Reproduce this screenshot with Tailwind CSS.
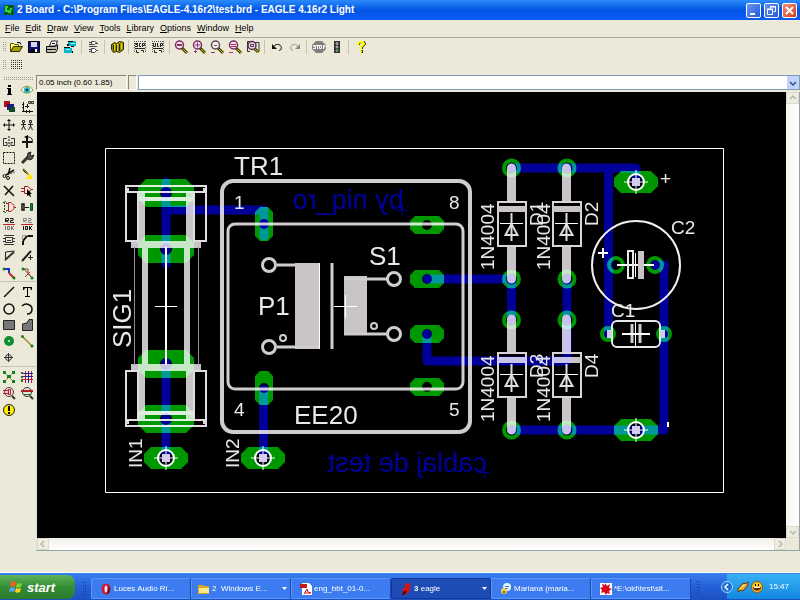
<!DOCTYPE html>
<html lang="en">
<head>
    <meta charset="UTF-8">
    <meta name="viewport" content="width=device-width, initial-scale=1.0">
    <title>2 Board - EAGLE 4.16r2 Light</title>
    <script src="https://cdn.jsdelivr.net/npm/@tailwindcss/browser@4"></script>
</head>
<body class="flex h-screen flex-col overflow-hidden bg-[#ece9d8] font-['Liberation_Sans',sans-serif] text-[8px] leading-none text-black">

    <!-- Title bar -->
    <header class="flex h-5 shrink-0 items-center gap-[2px] bg-linear-to-b from-[#2b8bfa] via-[#0354e4] to-[#0a5cf6] px-[3px]">
        <svg class="size-3" viewBox="0 0 12 12"><path fill="#0a6a1c" d="M1 1h10v10H1z"/><path fill="#35d048" d="M2 2h3v2H4v2h3V4h2v2H8v3H5V8H2z"/><path fill="#042c08" d="M6 2h4v1H6zM2 9h2v1H2zM9 8h1v2H9z"/></svg>
        <h1 class="flex-1 truncate text-[10px] leading-4 font-bold text-white">2 Board - C:\Program Files\EAGLE-4.16r2\test.brd - EAGLE 4.16r2 Light</h1>
        <div class="flex gap-[3px]">
            <button aria-label="Minimize" class="size-[15px] rounded-[2px] border border-white bg-linear-to-br from-[#6a96f4] to-[#2456d8]"><svg viewBox="0 0 13 13"><path fill="#fff" d="M3 9h5v2H3z"/></svg></button>
            <button aria-label="Restore" class="size-[15px] rounded-[2px] border border-white bg-linear-to-br from-[#6a96f4] to-[#2456d8]"><svg viewBox="0 0 13 13"><path fill="none" stroke="#fff" d="M5.500 4.500v-2h5v5h-2M2.500 5.500h5v5h-5zM2 5h6M5 3h6"/></svg></button>
            <button aria-label="Close" class="size-[15px] rounded-[2px] border border-white bg-linear-to-br from-[#f09078] to-[#d03c14]"><svg viewBox="0 0 13 13"><path fill="none" stroke="#fff" stroke-width="2" d="M3 3l7 7M10 3l-7 7"/></svg></button>
        </div>
    </header>

    <!-- Menu -->
    <nav class="flex h-[18px] shrink-0 items-center gap-[6px] border-b border-[#aca899] px-[5px] text-[9px]">
        <a href="#"><u>F</u>ile</a>
        <a href="#"><u>E</u>dit</a>
        <a href="#"><u>D</u>raw</a>
        <a href="#"><u>V</u>iew</a>
        <a href="#"><u>T</u>ools</a>
        <a href="#"><u>L</u>ibrary</a>
        <a href="#"><u>O</u>ptions</a>
        <a href="#"><u>W</u>indow</a>
        <a href="#"><u>H</u>elp</a>
    </nav>

    <!-- Action toolbar -->
    <div class="flex h-[18px] shrink-0 items-center">
        <svg class="h-3 w-[7px]" viewBox="0 0 7 12"><path stroke="#9d9a8c" stroke-dasharray="1 1" d="M3.500 1v10M5.500 1v10"/></svg>
        <button title="Open" class="w-[18px]"><svg class="mx-auto size-4" viewBox="0 0 16 16"><path fill="#ffff60" stroke="#585800" d="M2.500 12.500v-8h3l1 1h4v2"/><path fill="#a8a000" stroke="#303000" d="M2.500 12.500l3-5h9l-3 5z"/><path fill="none" stroke="#000" d="M9 3.500h3l1 2"/></svg></button>
        <button title="Save" class="w-[18px]"><svg class="mx-auto size-4" viewBox="0 0 16 16"><path fill="#10107c" stroke="#000" d="M2.500 2.500h11v11h-11z"/><path fill="#d8d8e8" d="M5 3h6v5H5z"/><path fill="#000" d="M5 10h6v3H5z"/><path fill="#fff" d="M9 10h2v3H9z"/></svg></button>
        <button title="Print" class="w-[18px]"><svg class="mx-auto size-4" viewBox="0 0 16 16"><path fill="#fff" stroke="#222" d="M5.500 7l2-5h6l-2 5z"/><path fill="#b8b8b0" stroke="#111" d="M2.500 7.500h9l2-2v5l-2 3h-9z"/><path stroke="#111" d="M3 10.500h9M8 4.500h3"/><path fill="#ff0" d="M9 11h2v1H9z"/></svg></button>
        <button title="CAM processor" class="w-[18px]"><svg class="mx-auto size-4" viewBox="0 0 16 16"><path fill="#00b8c8" d="M6 2h8v5H6zM2 9h8v5H2z"/><path fill="#000" d="M6 2h5v1H6zM9 7h3v1H9zM2 8h6v1H2zM10 12h1v2h-1zM5 5h2v2H5z"/><path fill="#a0ffff" d="M9 4h4v1H9zM4 10h4v1H4z"/></svg></button>
        <span class="mx-[2px] h-3.5 w-px bg-[#c8c4b4]"></span>
        <button title="Schematic" class="w-[18px]"><svg class="mx-auto size-4" viewBox="0 0 16 16"><path fill="#fff" stroke="#444" d="M6.500 2.500h3l2 1-2 2h-3zM6.500 9.500h3l2 2-2 2h-3z"/><path stroke="#444" d="M4 3.500h3M4 5.500h3M11 4.500h2M4 7.500h8M4 10.500h3M4 12.500h3M11 11.500h2"/></svg></button>
        <span class="mr-[3px] ml-[2px] h-3.5 w-px bg-[#c8c4b4]"></span>
        <button title="Library" class="w-[18px]"><svg class="mx-auto size-4" viewBox="0 0 16 16"><path fill="#989000" stroke="#2c2800" d="M2.500 5.500l3-2 2 1 3-2 4 1v7l-4 3-3-1-3 1-2-3z"/><path stroke="#e0d800" d="M5.500 5v6M8.500 5v7M12.500 4v6"/><path stroke="#222" d="M4.500 6v5M7.500 6v6M10.500 5v7"/></svg></button>
        <span class="mx-[2px] h-3.5 w-px bg-[#c8c4b4]"></span>
        <button title="Run script" class="w-[18px]"><svg class="mx-auto size-4" viewBox="0 0 16 16"><path fill="none" stroke="#555" stroke-dasharray="1 1" d="M2.500 2v11M2 2.500h12M13.500 2v11"/><path fill="none" stroke="#222" d="M6 4.500H3.500v1h2v2H3M9 4.500H7.500v3H9M10.500 8V4.500h2v2h-2M3 9.500h10M4.500 11v2.500H7M9 11.500h2.500v2"/></svg></button>
        <button title="Run ULP" class="w-[18px]"><svg class="mx-auto size-4" viewBox="0 0 16 16"><path fill="none" stroke="#555" stroke-dasharray="1 1" d="M2.500 2v11M2 2.500h12M13.500 2v11"/><path fill="none" stroke="#222" d="M3.500 4v3.500h2V4M7.500 4v3.500H9M10.500 8V4.500h2v2h-2M3 9.500h10M4.500 11v2.500H7M9 11.500h2.500v2"/></svg></button>
        <span class="mx-[2px] h-3.5 w-px bg-[#c8c4b4]"></span>
        <button title="Zoom to fit" class="w-[18px]"><svg class="mx-auto size-4" viewBox="0 0 16 16"><path stroke="#404000" stroke-width="3" d="M9 9l5 5"/><path stroke="#c8c000" d="M10 10l4 4"/><circle cx="6.500" cy="6" r="4" fill="#f4e4f0" stroke="#783060" stroke-width="1.500"/><path fill="#903060" d="M4 5h5v2H4z"/></svg></button>
        <button title="Zoom in" class="w-[18px]"><svg class="mx-auto size-4" viewBox="0 0 16 16"><path stroke="#404000" stroke-width="3" d="M9 9l5 5"/><path stroke="#c8c000" d="M10 10l4 4"/><circle cx="6.500" cy="6" r="4" fill="#f4e4f0" stroke="#783060" stroke-width="1.500"/><path stroke="#903080" d="M6.500 3.500v5M4 6h5M4.500 11v3M3 12.500h3"/></svg></button>
        <button title="Zoom out" class="w-[18px]"><svg class="mx-auto size-4" viewBox="0 0 16 16"><path stroke="#404000" stroke-width="3" d="M9 9l5 5"/><path stroke="#c8c000" d="M10 10l4 4"/><circle cx="6.500" cy="6" r="4" fill="#f8f4f4" stroke="#604858" stroke-width="1.500"/><path stroke="#903080" d="M5 6.500h3M2 13.500h4"/></svg></button>
        <button title="Redraw" class="w-[18px]"><svg class="mx-auto size-4" viewBox="0 0 16 16"><path stroke="#404000" stroke-width="3" d="M9 9l5 5"/><path stroke="#c8c000" d="M10 10l4 4"/><circle cx="6.500" cy="6" r="4" fill="#f4e4f0" stroke="#783060" stroke-width="1.500"/><path stroke="#c02060" d="M4 5.500h5M4 7.500h5M2 13.500h4"/></svg></button>
        <button title="Zoom select" class="w-[18px]"><svg class="mx-auto size-4" viewBox="0 0 16 16"><path fill="none" stroke="#333" d="M5 12.500H2.500V2.500H5M10 3.500h4v9h-2"/><path stroke="#404000" stroke-width="3" d="M9 9l4 4"/><path stroke="#c8c000" d="M10 10l4 4"/><circle cx="7" cy="6.500" r="4" fill="#e8d8e4" stroke="#583050" stroke-width="1.500"/><path fill="none" stroke="#583050" d="M5.500 5.500h3v2h-3z"/></svg></button>
        <span class="mr-[3px] ml-[2px] h-3.5 w-px bg-[#c8c4b4]"></span>
        <button title="Undo" class="w-[18px]"><svg class="mx-auto size-4" viewBox="0 0 16 16"><path fill="none" stroke="#111" d="M5 7.500c2-4 9-2 7 3l-2 1"/><path fill="#111" d="M3 5v5h5z"/></svg></button>
        <button title="Redo" class="w-[18px]"><svg class="mx-auto size-4" viewBox="0 0 16 16"><path fill="none" stroke="#a09c90" d="M11 7.500c-2-4-9-2-7 3l2 1"/><path fill="#8c887c" d="M13 5v5H8z"/></svg></button>
        <span class="mr-[3px] ml-[2px] h-3.5 w-px bg-[#c8c4b4]"></span>
        <button title="Stop" class="w-[18px]"><svg class="mx-auto size-4" viewBox="0 0 16 16"><path fill="#808080" d="M5 2h6l4 4v4l-4 4H5l-4-4V6z"/><path fill="none" stroke="#fff" d="M4.500 6.500H2.500v1h2v2H2M5 6.500h3M6.500 6v4M8.500 6.500h2v3h-2zM12.500 10V6.500h1.500v1.500h-2"/></svg></button>
        <button title="Go" class="w-[18px]"><svg class="mx-auto size-4" viewBox="0 0 16 16"><path fill="#303030" d="M5 2h6v12H5z"/><circle cx="8" cy="4.500" r="1.500" fill="#a0a0a0"/><circle cx="8" cy="8" r="1.500" fill="#a0a0a0"/><circle cx="8" cy="11.500" r="1.500" fill="#5c9c5c"/></svg></button>
        <span class="mr-[3px] ml-[2px] h-3.5 w-px bg-[#c8c4b4]"></span>
        <button title="Help" class="w-[18px]"><svg class="mx-auto size-4" viewBox="0 0 16 16"><path fill="none" stroke="#333300" stroke-width="2" d="M6 6V4l2-1h3l1 2-3 3v2M9 11v3"/><path fill="none" stroke="#ff0" stroke-width="2" d="M5 6V4l2-1h3l1 2-3 3v2M8 11.500v2"/></svg></button>
    </div>

    <!-- Parameter toolbar -->
    <div class="flex h-[18px] shrink-0 items-center">
        <svg class="h-3 w-[7px]" viewBox="0 0 7 12"><path stroke="#9d9a8c" stroke-dasharray="1 1" d="M3.500 1v10M5.500 1v10"/></svg>
        <button title="Grid" class="w-[18px]"><svg class="mx-auto size-4" viewBox="0 0 16 16"><path stroke="#333" stroke-dasharray="1 1" d="M3 3.500h11M3 5.500h11M3 7.500h11M3 9.500h11M3 11.500h11"/></svg></button>
    </div>

    <div class="flex min-h-0 flex-1">
        <!-- Command palette -->
        <aside class="w-9 shrink-0">
            <svg class="h-2 w-9" viewBox="0 0 36 8"><path stroke="#9d9a8c" stroke-dasharray="1 1" d="M4 3.500h29M4 5.500h29"/></svg>
            <div class="grid h-[34px] auto-rows-fr grid-cols-2 border-b border-[#c8c4b4]">
                <button title="Info"><svg class="mx-auto size-4" viewBox="0 0 16 16"><path d="M7 3h3v2H7zM6 6h4v6h1v1H6v-1h1V7H6z"/></svg></button>
                <button title="Show"><svg class="mx-auto size-4" viewBox="0 0 16 16"><path fill="#fff" stroke="#a09010" d="M2 8c3-5 9-5 12 0-3 4-9 4-12 0z"/><circle cx="8" cy="8" r="3" fill="#10b8d0"/><circle cx="8" cy="8" r="1"/></svg></button>
                <button title="Display"><svg class="mx-auto size-4" viewBox="0 0 16 16"><path fill="#b01020" d="M3 2h6v6H3z"/><path fill="#1818a0" d="M6 5h7v6H6z"/><path fill="#104820" d="M8 8h6v5H8z"/><path fill="#301050" d="M6 5h3v3H6z"/></svg></button>
                <button title="Mark"><svg class="mx-auto size-4" viewBox="0 0 16 16"><path fill="none" stroke="#111" d="M4.500 3v9M3 12.500h11M3 5.500h2M3 8.500h2M7.500 11v3M10.500 11v3M8.500 5v4M6 7.500h4"/><path fill="none" stroke="#333" d="M9.500 2.500h2v2h-2zM12.500 2.500h2v2h-2z"/></svg></button>
            </div>
            <div class="grid h-[166px] auto-rows-fr grid-cols-2 border-b border-[#c8c4b4] pt-px">
                <button title="Move"><svg class="mx-auto size-4" viewBox="0 0 16 16"><path stroke="#111" d="M8 3v10M3 8h10"/><path d="M8 2l2 2H6zM8 14l2-2H6zM2 8l2-2v4zM14 8l-2-2v4z"/></svg></button>
                <button title="Copy"><svg class="mx-auto size-4" viewBox="0 0 16 16"><path fill="none" stroke="#222" d="M3.500 3.500h2v2h-2zM4.500 6v4M2 7.500h5M4.500 9l-2 4M4.500 9l2 4M10.500 3.500h2v2h-2zM11.500 6v4M9 7.500h5M11.500 9l-2 4M11.500 9l2 4"/></svg></button>
                <button title="Mirror"><svg class="mx-auto size-4" viewBox="0 0 16 16"><path fill="none" stroke="#333" d="M6 4.500H2.500v7H6v-3H4M10 4.500h3.500v7H10v-3h2"/><path stroke="#111" stroke-dasharray="2 1" d="M8 2v12"/></svg></button>
                <button title="Rotate"><svg class="mx-auto size-4" viewBox="0 0 16 16"><path fill="none" stroke="#111" stroke-width="2" d="M8 4v10M3 8h10"/><path fill="none" stroke="#111" d="M9 3c4 0 5 3 4 6"/><path d="M5 3l4-2v4z"/></svg></button>
                <button title="Group"><svg class="mx-auto size-4" viewBox="0 0 16 16"><path fill="none" stroke="#111" stroke-dasharray="2 1" d="M2.500 2.500h11v11h-11z"/></svg></button>
                <button title="Change"><svg class="mx-auto size-4" viewBox="0 0 16 16"><path fill="none" stroke="#333" stroke-width="3" d="M3 13l6-6"/><path fill="#555" stroke="#222" d="M8 7l1-4 3-1-1 3 1 1 3-1-2 4-3 1z"/></svg></button>
                <button title="Cut"><svg class="mx-auto size-4" viewBox="0 0 16 16"><path fill="none" stroke="#111" stroke-width="1.500" d="M13 4L5 9M9 2L7 9"/><circle cx="3.500" cy="10" r="1.500" fill="none" stroke="#111"/><circle cx="7" cy="12" r="1.500" fill="none" stroke="#111"/><path stroke="#777" d="M9 8l5-2"/></svg></button>
                <button title="Paste"><svg class="mx-auto size-4" viewBox="0 0 16 16"><path stroke="#888020" stroke-width="2" d="M4 3l6 6"/><path stroke="#111" d="M4 4l3 3"/><path fill="#ffe800" d="M9 7l4 3v3H6l3-2z"/></svg></button>
                <button title="Delete"><svg class="mx-auto size-4" viewBox="0 0 16 16"><path fill="none" stroke="#111" stroke-width="1.500" d="M3 3l10 10M12 3l-8 9"/></svg></button>
                <button title="Add"><svg class="mx-auto size-4" viewBox="0 0 16 16"><path fill="none" stroke="#a02020" d="M5.500 3.500H9l3 3-3 4H5.500zM2 5.500h3M2 8.500h3M12 6.500h2"/><path d="M8 6l5 5h-2l1 3h-1l-1-2-2 1z"/></svg></button>
                <button title="Pinswap"><svg class="mx-auto size-4" viewBox="0 0 16 16"><path fill="none" stroke="#b02020" d="M7.500 3.500H10l3 3v3l-3 3H7.500zM13 8.500h2M5 4.500h3M5 11.500h3"/><path fill="none" stroke="#106020" stroke-dasharray="2 1" d="M3.500 3v10M2 4l2-2 2 2M2 12l2 2 2-2"/></svg></button>
                <button title="Gateswap"><svg class="mx-auto size-4" viewBox="0 0 16 16"><path fill="none" stroke="#111" stroke-width="1.500" d="M3 5h2v6H3z"/><path fill="#208030" stroke="#053" d="M11.500 4.500h2v7h-2z"/><path stroke="#111" d="M6 8.500h4"/></svg></button>
                <button title="Name"><svg class="mx-auto size-4" viewBox="0 0 16 16"><path fill="none" stroke="#111" d="M4.500 6V2.500h3v2h-3l3 2M9 2.500h3v2H9.500v2H13"/><path stroke="#c02020" d="M2 8.500h12"/><path fill="none" stroke="#777" d="M4.500 10v4M6.500 10.500h2v3h-2zM10.500 10v4M13 10l-2 2 2 2"/></svg></button>
                <button title="Value"><svg class="mx-auto size-4" viewBox="0 0 16 16"><path fill="none" stroke="#888" d="M4.500 6V2.500h3v2h-3l3 2M9 2.500h3v2H9.500v2H13"/><path stroke="#c02020" d="M2 8.500h12"/><path fill="none" stroke="#111" d="M4.500 10v4M6.500 10.500h2v3h-2zM10.500 10v4M13 10l-2 2 2 2"/></svg></button>
                <button title="Smash"><svg class="mx-auto size-4" viewBox="0 0 16 16"><path fill="none" stroke="#333" d="M4.500 5.500h7v5h-7zM3 3.500h10M3 12.500h10M2 6.500h2M2 9.500h2M12 6.500h2M12 9.500h2M6 8.500h4"/></svg></button>
                <button title="Miter"><svg class="mx-auto size-4" viewBox="0 0 16 16"><path fill="none" stroke="#111" stroke-width="2" d="M4 13V9l4-5h6"/><path stroke="#999" d="M3.500 9V3.500H9" fill="none"/></svg></button>
                <button title="Split"><svg class="mx-auto size-4" viewBox="0 0 16 16"><path fill="none" stroke="#222" d="M4.500 12.500V4l9-1"/><path stroke="#333" stroke-width="2" d="M4 12l9-8"/></svg></button>
                <button title="Optimize"><svg class="mx-auto size-4" viewBox="0 0 16 16"><path stroke="#222" stroke-width="2" d="M3 13L12 3"/><path stroke="#222" d="M9 9.500h5M11.500 7v5"/></svg></button>
                <button title="Route"><svg class="mx-auto size-4" viewBox="0 0 16 16"><path fill="none" stroke="#1830d0" stroke-width="2" d="M3 4h5v4"/><path stroke="#d02020" stroke-width="2" d="M8 8l5 5"/><circle cx="3" cy="4" r="1.500" fill="#108020"/><circle cx="13" cy="13" r="1.500" fill="#108020"/></svg></button>
                <button title="Ripup"><svg class="mx-auto size-4" viewBox="0 0 16 16"><path fill="none" stroke="#904020" d="M3 4h6v4l4 5M5 4l8 9M6 12l5-5"/><circle cx="4" cy="4" r="1.500" fill="#108020"/><circle cx="13" cy="13" r="1.500" fill="#108020"/></svg></button>
            </div>
            <div class="grid h-[85px] auto-rows-fr grid-cols-2 border-b border-[#c8c4b4] pt-[2px]">
                <button title="Wire"><svg class="mx-auto size-4" viewBox="0 0 16 16"><path stroke="#111" stroke-width="1.500" d="M3 13L13 3"/></svg></button>
                <button title="Text"><svg class="mx-auto size-4" viewBox="0 0 16 16"><path d="M4 3h9v3h-1l-1-2H9v8h2v1H6v-1h2V4H6L5 6H4z"/></svg></button>
                <button title="Circle"><svg class="mx-auto size-4" viewBox="0 0 16 16"><circle cx="8" cy="8" r="5" fill="none" stroke="#111" stroke-width="1.500"/></svg></button>
                <button title="Arc"><svg class="mx-auto size-4" viewBox="0 0 16 16"><path fill="none" stroke="#111" stroke-width="1.500" d="M3 5c4-4 10-1 10 3 0 3-2 5-5 5"/></svg></button>
                <button title="Rect"><svg class="mx-auto size-4" viewBox="0 0 16 16"><path fill="#777" stroke="#222" d="M2.500 3.500h11v9h-11z"/></svg></button>
                <button title="Polygon"><svg class="mx-auto size-4" viewBox="0 0 16 16"><path fill="#777" stroke="#222" d="M3.500 13.500V7L8 6l2-3.500h3.500v11z"/></svg></button>
                <button title="Via"><svg class="mx-auto size-4" viewBox="0 0 16 16"><circle cx="8" cy="8" r="5" fill="#109030"/><circle cx="8" cy="8" r="1" fill="#eee"/></svg></button>
                <button title="Signal"><svg class="mx-auto size-4" viewBox="0 0 16 16"><path stroke="#a09020" stroke-width="1.500" d="M4 4l9 9"/><circle cx="3.500" cy="3.500" r="1.500" fill="#108020"/><circle cx="13" cy="13" r="1.500" fill="#108020"/></svg></button>
                <button title="Hole"><svg class="mx-auto size-4" viewBox="0 0 16 16"><circle cx="7.500" cy="7.500" r="3" fill="none" stroke="#333"/><path stroke="#333" d="M3 7.500h9M7.500 3v9"/></svg></button>
            </div>
            <div class="grid h-[51px] auto-rows-fr grid-cols-2 pt-[2px]">
                <button title="Ratsnest"><svg class="mx-auto size-4" viewBox="0 0 16 16"><path stroke="#909020" d="M3 3l10 10M13 3L3 13"/><path fill="#108020" d="M2 2h3v3H2zM11 2h3v3h-3zM6 6h4v3H6zM2 11h3v3H2zM11 11h3v3h-3z"/></svg></button>
                <button title="Auto"><svg class="mx-auto size-4" viewBox="0 0 16 16"><path stroke="#c01840" d="M6.500 2v12M12.500 2v12M2 10.500h12"/><path stroke="#3020a0" d="M3 4.500h11M3 7.500h11M9.500 2v12"/><path fill="#108020" d="M2 3h2v2H2zM2 7h2v2H2zM2 11h2v2H2z"/></svg></button>
                <button title="ERC"><svg class="mx-auto size-4" viewBox="0 0 16 16"><circle cx="8" cy="7" r="4.500" fill="#f0d8d8" stroke="#444"/><path fill="none" stroke="#b02020" d="M2 5.500h5M2 8.500h5M7.500 4.500h2v5h-2z"/><path stroke="#333" stroke-width="2" d="M11 11l3 3"/></svg></button>
                <button title="DRC"><svg class="mx-auto size-4" viewBox="0 0 16 16"><circle cx="8" cy="7" r="4.500" fill="#e0e8d8" stroke="#333"/><path stroke="#b02020" stroke-width="2" d="M2 6h12"/><path stroke="#207030" d="M4 9.500h8"/><path stroke="#333" stroke-width="2" d="M11 11l3 3"/></svg></button>
                <button title="Errors"><svg class="mx-auto size-4" viewBox="0 0 16 16"><circle cx="8" cy="8" r="5.500" fill="#ffee00" stroke="#222"/><path d="M7 4h2v5H7zM7 10h2v2H7z"/></svg></button>
            </div>
        </aside>

        <div class="flex min-w-0 flex-1 flex-col">
            <!-- Coordinates and command line -->
            <div class="flex h-[18px] shrink-0 items-center pb-px">
                <output class="flex h-[15px] w-[91px] items-center border border-t-[#888478] border-r-white border-b-white border-l-[#888478] pl-[2px]">0.05 inch (0.60 1.85)</output>
                <span class="mx-px h-[15px] w-[9px] border border-t-[#888478] border-r-white border-b-white border-l-[#888478]"></span>
                <div class="flex h-[15px] min-w-0 flex-1 border border-[#7f9db9] bg-white">
                    <input type="text" aria-label="Command" class="min-w-0 flex-1 px-1 outline-none">
                    <button aria-label="Command history" class="w-3 bg-[#c1d3fb]"><svg class="mx-auto size-2" viewBox="0 0 8 8"><path fill="none" stroke="#34507c" stroke-width="1.500" d="M1 3l3 3 3-3"/></svg></button>
                </div>
            </div>

            <div class="flex min-h-0 flex-1 border-r border-b border-l border-[#90a4ac] border-l-[#d8e4e8]">
                <div class="flex min-w-0 flex-1 flex-col">
                    <!-- Board -->
                    <svg class="min-h-0 w-full flex-1 bg-black font-['Liberation_Sans',sans-serif]" viewBox="37 92 749 446">
                        <defs>
                            <g id="diode">
                                <path stroke="#c8c4c8" stroke-width="9" stroke-linecap="round" d="M511.500 168v33M511.500 246v33"/>
                                <path fill="#000" d="M498 202h28v44h-28z"/>
                                <path fill="none" stroke="#d8d4d8" stroke-width="2" d="M498 202h28v44h-28z"/>
                                <path fill="#c8c4c8" d="M498 206h28v6h-28z"/>
                                <path fill="none" stroke="#e0dce0" stroke-width="2" d="M511.500 224l-6 11h12z"/>
                                <path stroke="#fff" d="M500 223.500h23"/>
                                <path stroke="#e0dce0" stroke-width="2" d="M511.500 213v28"/>
                            </g>
                            <g id="fuse-clip">
                                <path fill="#c8c4c8" d="M138 193h7v49h-7zM186 193h8v49h-8zM131 241h70v7h-70z"/>
                                <path fill="#dcd8dc" d="M138 197h56v4h-56z"/>
                                <path fill="none" stroke="#e0dce0" stroke-width="2" d="M126 241v-55h80v55h-12v-49h-56v49zM126 192h12M194 192h12M128 188v4M204 188v4"/>
                            </g>
                            <path id="pad-wire" fill-rule="evenodd" d="M-15-11h30l7 7v8l-7 7h-30l-7-7v-8zM0-7a7 7 0 1 0 0 14a7 7 0 1 0 0-14z"/>
                            <path id="pad-fuse" fill-rule="evenodd" d="M-20-14h40l8 8v12l-8 8h-40l-8-8v-12zM0-6a6 6 0 1 0 0 12a6 6 0 1 0 0-12z"/>
                            <path id="pad-h" fill-rule="evenodd" d="M-12-9h24l5 5v8l-5 5h-24l-5-5v-8zM0-5a5 5 0 1 0 0 10a5 5 0 1 0 0-10z"/>
                            <path id="pad-v" fill-rule="evenodd" d="M-9-12v24l5 5h8l5-5v-24l-5-5h-8zM0-5a5 5 0 1 0 0 10a5 5 0 1 0 0-10z"/>
                            <g id="wire-mark">
                                <circle r="8" fill="none" stroke="#fff" stroke-width="2"/>
                                <path stroke="#fff" d="M-12 0h24M0-12v24"/>
                                <path fill="#d8ccec" d="M-4-4h8v8h-8z"/>
                            </g>
                        </defs>

                        <!-- Bottom copper -->
                        <g fill="none" stroke="#000098" stroke-width="9" stroke-linecap="round" stroke-linejoin="round">
                            <path d="M166 182v82M166 210h98v26M166 362v96M263.500 389v69"/>
                            <path d="M427 279h85M511.500 279v41M567 279v41M427 334v27h140v-41"/>
                            <path d="M511.500 168H636v14M608.500 168v166M655 265h9v165M511.500 430H664"/>
                        </g>
                        <g fill="#000098" font-size="27">
                            <text transform="translate(404 209) scale(-1 1)">by niq_ro</text>
                            <text transform="translate(487 472) scale(-1 1)">cablaj de test</text>
                            <path stroke="#000098" d="M396 210.500h12M402.500 204v12M478 472.500h12M484.500 467v11"/>
                        </g>

                        <!-- Pads -->
                        <g class="mix-blend-screen" fill="#009800">
                            <use href="#pad-fuse" x="166" y="193"/>
                            <use href="#pad-fuse" x="166" y="249"/>
                            <use href="#pad-fuse" x="166" y="364"/>
                            <use href="#pad-fuse" x="166" y="419"/>
                            <use href="#pad-wire" x="166" y="458"/>
                            <use href="#pad-wire" x="263" y="458"/>
                            <use href="#pad-wire" x="636" y="182"/>
                            <use href="#pad-wire" x="636" y="430"/>
                            <use href="#pad-v" x="264" y="224"/>
                            <use href="#pad-v" x="264" y="388"/>
                            <use href="#pad-h" x="427" y="225"/>
                            <use href="#pad-h" x="427" y="279"/>
                            <use href="#pad-h" x="427" y="334"/>
                            <use href="#pad-h" x="427" y="387"/>
                            <g fill="none" stroke="#009800" stroke-width="4">
                                <circle cx="511.500" cy="168" r="7.500"/><circle cx="567" cy="168" r="7.500"/>
                                <circle cx="511.500" cy="279" r="7.500"/><circle cx="567" cy="279" r="7.500"/>
                                <circle cx="511.500" cy="320" r="7.500"/><circle cx="567" cy="320" r="7.500"/>
                                <circle cx="511.500" cy="430" r="7.500"/><circle cx="567" cy="430" r="7.500"/>
                                <circle cx="616" cy="265" r="7"/><circle cx="655" cy="265" r="7"/>
                                <circle cx="608" cy="334" r="6"/><circle cx="664" cy="334" r="6"/>
                            </g>
                        </g>

                        <!-- Placement outlines -->
                        <g class="mix-blend-screen" fill="none" stroke="#d0ccd0">
                            <path stroke="#fff" d="M105.500 148.500h618v344h-618z"/>
                            <use href="#fuse-clip" stroke="none"/>
                            <use href="#fuse-clip" stroke="none" transform="matrix(1 0 0 -1 0 612)"/>
                            <path stroke="#c8c4c8" stroke-width="6" d="M145 247v118M187 247v118"/>
                            <path stroke="#908c90" d="M134.500 247v118M198.500 247v118"/>
                            <path stroke="#fff" stroke-width="2" d="M166 247v118"/>
                            <path stroke="#fff" d="M155 306.500h22"/>

                            <rect x="222" y="181" width="248" height="251" rx="11" stroke-width="4"/>
                            <rect x="228" y="224" width="235" height="165" rx="7" stroke-width="3"/>
                            <path fill="#c8c4c8" stroke="none" d="M295 263h24v86h-24zM344 276h23v59h-23z"/>
                            <path stroke-width="3" d="M277 265h18M277 347h42M332 263v86M344 279h43M344 334h43"/>
                            <path stroke="#fff" d="M319.500 263v86M334 306.500h23M345.500 295v23"/>
                            <g stroke-width="3"><circle cx="269" cy="265" r="6.500"/><circle cx="269" cy="347" r="6.500"/><circle cx="394" cy="279" r="6.500"/><circle cx="394" cy="334" r="6.500"/></g>
                            <g stroke-width="2"><circle cx="283" cy="338" r="3"/><circle cx="374" cy="326" r="3"/></g>

                            <use href="#diode" stroke="none"/>
                            <use href="#diode" stroke="none" x="55"/>
                            <use href="#diode" stroke="none" y="151"/>
                            <use href="#diode" stroke="none" x="55" y="151"/>

                            <circle cx="636" cy="265" r="44" stroke="#f0f0f0" stroke-width="2"/>
                            <path stroke="#fff" stroke-width="2" d="M617 265h37M598 253h10M603 248v10"/>
                            <path stroke="#e8e8e8" stroke-width="2" d="M628 251h5v27h-5z"/>
                            <path fill="#c8c4c8" stroke="none" d="M638 251h6v28h-6z"/>
                            <path stroke="#fff" d="M635.500 253v24"/>
                            <rect x="612" y="321" width="48" height="26" rx="5" stroke="#e8e8e8" stroke-width="2"/>
                            <path fill="#d0ccd0" stroke="none" d="M607 330h5v8h-5zM660 330h5v8h-5z"/>
                            <path stroke-width="3" d="M632 324v19M640 324v19"/>
                            <path stroke="#fff" d="M635.500 322v24"/>
                            <path stroke="#fff" stroke-width="2" d="M622 334h28M668 422v5"/>
                        </g>
                        <use href="#wire-mark" x="166" y="458"/>
                        <use href="#wire-mark" x="263" y="458"/>
                        <use href="#wire-mark" x="636" y="182"/>
                        <use href="#wire-mark" x="636" y="430"/>

                        <!-- Names and values -->
                        <g fill="#e8e8e8" font-size="26">
                            <text x="234" y="175">TR1</text>
                            <text x="294" y="424">EE20</text>
                            <text x="258" y="315">P1</text>
                            <text x="369" y="265">S1</text>
                            <text transform="translate(131 348) rotate(-90)">SIG1</text>
                        </g>
                        <g fill="#e8e8e8" font-size="19">
                            <text x="234" y="209">1</text>
                            <text x="449" y="209">8</text>
                            <text x="234" y="416">4</text>
                            <text x="449" y="416">5</text>
                            <text x="671" y="234">C2</text>
                            <text x="611" y="317">C1</text>
                            <text x="660" y="185">+</text>
                            <text transform="translate(142 468) rotate(-90)">IN1</text>
                            <text transform="translate(239 468) rotate(-90)">IN2</text>
                            <text transform="translate(494 270) rotate(-90)">1N4004</text>
                            <text transform="translate(550 270) rotate(-90)">1N4004</text>
                            <text transform="translate(494 422) rotate(-90)">1N4004</text>
                            <text transform="translate(550 422) rotate(-90)">1N4004</text>
                            <text transform="translate(543 226) rotate(-90)">D1</text>
                            <text transform="translate(598 226) rotate(-90)">D2</text>
                            <text transform="translate(543 378) rotate(-90)">D3</text>
                            <text transform="translate(598 378) rotate(-90)">D4</text>
                        </g>
                    </svg>
                    <div class="flex h-3 shrink-0 justify-between bg-linear-to-b from-[#f0efe8] to-white">
                        <button aria-label="Scroll left" class="w-3 border border-[#dcdacc] bg-[#efede2]"><svg class="mx-auto size-2" viewBox="0 0 8 8"><path fill="none" stroke="#b8b6a8" stroke-width="1.500" d="M5 1L2 4l3 3"/></svg></button>
                        <button aria-label="Scroll right" class="w-3 border border-[#dcdacc] bg-[#efede2]"><svg class="mx-auto size-2" viewBox="0 0 8 8"><path fill="none" stroke="#b8b6a8" stroke-width="1.500" d="M3 1l3 3-3 3"/></svg></button>
                    </div>
                </div>
                <div class="flex w-[13px] shrink-0 flex-col justify-between bg-linear-to-r from-[#f6f5ee] to-white">
                    <button aria-label="Scroll up" class="h-3 border border-[#dcdacc] bg-[#efede2]"><svg class="mx-auto size-2" viewBox="0 0 8 8"><path fill="none" stroke="#b8b6a8" stroke-width="1.500" d="M1 5l3-3 3 3"/></svg></button>
                    <div class="bg-[#ece9d8] pb-3">
                        <button aria-label="Scroll down" class="block h-3 w-full border border-[#dcdacc] bg-[#efede2]"><svg class="mx-auto size-2" viewBox="0 0 8 8"><path fill="none" stroke="#b8b6a8" stroke-width="1.500" d="M1 3l3 3 3-3"/></svg></button>
                    </div>
                </div>
            </div>
        </div>
    </div>

    <!-- Status bar -->
    <div class="h-[22px] shrink-0 border-b border-white"></div>

    <!-- Taskbar -->
    <footer class="flex h-[27px] shrink-0 items-end bg-linear-to-b from-[#3a80f0] via-[#2460d8] to-[#1c50c0] pb-px text-white">
        <button class="flex h-6 w-[75px] shrink-0 items-center gap-[3px] rounded-r-lg bg-linear-to-b from-[#5cb45c] via-[#338c33] to-[#2c7c2c] pl-2 text-[13px] font-bold text-white italic">
            <svg class="size-4" viewBox="0 0 16 16"><path fill="#f06020" d="M3 3c2-1 3-1 5 0L7 8C5 7 4 7 2 8z"/><path fill="#80d030" d="M9 4c2 1 3 1 5 0l-1 4c-2 1-3 1-5 0z"/><path fill="#60a0ff" d="M2 9c2-1 3-1 5 0l-1 4c-2-1-3-1-5 0z"/><path fill="#ffd020" d="M8 9c2 1 3 1 5 0l-1 4c-2 1-3 1-5 0z"/></svg>
            start
        </button>
        <svg class="h-5 w-4 shrink-0" viewBox="0 0 16 20"><path stroke="#103898" stroke-dasharray="1 2" d="M8.500 3v14M10.500 3v14"/></svg>
        <div class="flex min-w-0 flex-1">
            <button class="flex h-[21px] w-[100px] items-center gap-[2px] rounded-[2px] border border-[#5a98f8] border-r-[#1848b0] bg-[#3c7cf0] pl-2">
                <svg class="size-3 shrink-0" viewBox="0 0 12 12"><ellipse cx="6" cy="6" rx="4.500" ry="5.500" fill="#d01828"/><ellipse cx="6" cy="6" rx="1.500" ry="3.500" fill="#f0e0f0"/><path fill="#601020" d="M9 3l1 3-1 4-2 1 1-5z"/></svg>
                Luces Audio Rí...
            </button>
            <button class="flex h-[21px] w-[100px] items-center gap-[2px] rounded-[2px] border border-[#5a98f8] border-r-[#1848b0] bg-[#3c7cf0] pr-[3px] pl-1.5">
                <svg class="size-3 shrink-0" viewBox="0 0 12 12"><path fill="#d8a820" d="M0 2h5l1 1h5v8H0z"/><path fill="#ffe890" d="M1 5h10v5H1z"/></svg>
                <span class="flex-1 text-left">2 &nbsp;Windows E...</span>
                <svg class="h-1 w-[5px]" viewBox="0 0 5 4"><path fill="#fff" d="M0 0h5L2.500 3z"/></svg>
            </button>
            <button class="flex h-[21px] w-[100px] items-center gap-[2px] rounded-[2px] border border-[#5a98f8] border-r-[#1848b0] bg-[#3c7cf0] pl-2">
                <svg class="size-3 shrink-0" viewBox="0 0 12 12"><path fill="#fff" d="M2 0h7l3 3v9H2z"/><path fill="#c81818" d="M0 1h7v4H0z"/><path fill="none" stroke="#c81818" d="M4 11l3-5 1 3 3 1H5"/></svg>
                eng_bbt_01-0...
            </button>
            <button class="flex h-[21px] w-[100px] items-center gap-[2px] rounded-[2px] border border-[#12389c] bg-[#1c4cb4] pr-[3px] pl-2">
                <svg class="size-3 shrink-0" viewBox="0 0 12 12"><path fill="#e01010" d="M5 1l4-1 2 3-2 1 1 4-4 3H2l1-3-1-2 3-1z"/><path fill="#600" d="M3 9l3-2 1 2-3 3H2z"/></svg>
                <span class="flex-1 text-left"><b>3</b> eagle</span>
                <svg class="h-1 w-[5px]" viewBox="0 0 5 4"><path fill="#fff" d="M0 0h5L2.500 3z"/></svg>
            </button>
            <button class="flex h-[21px] w-[100px] items-center gap-[2px] rounded-[2px] border border-[#5a98f8] border-r-[#1848b0] bg-[#3c7cf0] pl-2">
                <svg class="size-3 shrink-0" viewBox="0 0 12 12"><circle cx="7" cy="4" r="4" fill="#e8f4ff"/><circle cx="4" cy="8" r="3" fill="#f0d040"/><path fill="#4080c0" d="M5 3h4v1H5zM5 5h3v1H5z"/><path fill="#806010" d="M3 8h2v2H3z"/></svg>
                Mariana (maria...
            </button>
            <button class="flex h-[21px] w-[100px] items-center gap-[2px] rounded-[2px] border border-[#5a98f8] border-r-[#1848b0] bg-[#3c7cf0] pl-2">
                <svg class="size-3 shrink-0" viewBox="0 0 12 12"><path fill="#fff" d="M0 0h12v12H0z"/><path fill="#d80818" d="M5 0l2 3 3-2-1 4 3 1-3 2 1 3-3-1-1 2-2-3-3 1 1-3-2-2 3-1-1-3 3 1z"/></svg>
                *E:\old\test\sit...
            </button>
            <svg class="h-5 w-4" viewBox="0 0 16 20"><path stroke="#103898" stroke-dasharray="1 2" d="M6.500 3v14M8.500 3v14"/></svg>
        </div>
        <div class="flex h-[25px] w-[73px] shrink-0 items-center gap-[2px] bg-linear-to-b from-[#38b0f4] to-[#1088e0]">
            <button aria-label="Show hidden icons" class="-ml-[6px] size-3 rounded-full border border-[#a0d8ff] bg-[#1c70d8]"><svg viewBox="0 0 10 10"><path fill="none" stroke="#fff" stroke-width="1.500" d="M6 2L3 5l3 3"/></svg></button>
            <svg class="ml-[2px] size-3" viewBox="0 0 12 12"><path fill="#f0b030" stroke="#5a3808" d="M1 8l5-6 2 1 3-2v3l-5 6-2-1-3 2z"/><path stroke="#fff0a0" d="M3 8l5-5"/></svg>
            <svg class="size-3" viewBox="0 0 12 12"><circle cx="6" cy="6" r="5.500" fill="#f8c828" stroke="#905808"/><path fill="#702008" d="M2 6h8c0 5-8 5-8 0z"/><path fill="#fff" d="M3 6h6v1H3z"/><path d="M4 3h1v2H4zM7 3h1v2H7z"/></svg>
            <time class="flex-1 pl-1">15:47</time>
        </div>
    </footer>
</body>
</html>
